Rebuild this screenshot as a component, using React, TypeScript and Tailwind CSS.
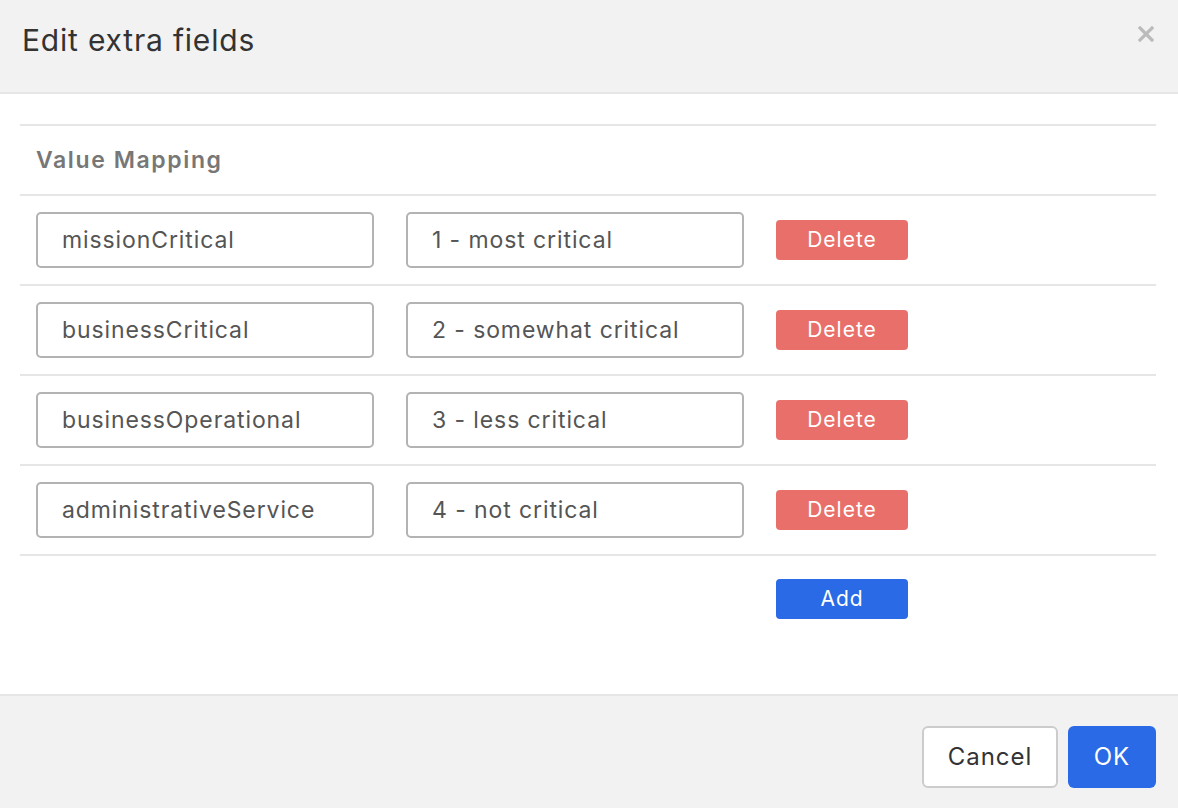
import { useState } from 'react';

type Mapping = { id: number; key: string; label: string };

const initialMappings: Mapping[] = [
  { id: 1, key: 'missionCritical', label: '1 - most critical' },
  { id: 2, key: 'businessCritical', label: '2 - somewhat critical' },
  { id: 3, key: 'businessOperational', label: '3 - less critical' },
  { id: 4, key: 'administrativeService', label: '4 - not critical' },
];

const font = { fontFamily: 'Inter, "Noto Sans", sans-serif' };

export default function App(): JSX.Element {
  const [mappings, setMappings] = useState<Mapping[]>(initialMappings);

  const update = (id: number, field: 'key' | 'label', value: string): void => {
    setMappings((rows) => rows.map((r) => (r.id === id ? { ...r, [field]: value } : r)));
  };

  const remove = (id: number): void => {
    setMappings((rows) => rows.filter((r) => r.id !== id));
  };

  const add = (): void => {
    setMappings((rows) => [...rows, { id: Date.now(), key: '', label: '' }]);
  };

  return (
    <div className="flex h-[808px] w-full flex-col overflow-hidden bg-white" style={font}>
      {/* Header */}
      <div className="flex h-[94px] shrink-0 items-start justify-between border-b-2 border-[#e6e6e6] bg-[#f2f2f2] pl-[22px] pr-[24px]">
        <h1 className="mt-[18px] text-[30px] font-normal tracking-[0.8px] text-[#333]">Edit extra fields</h1>
        <button className="mt-[26px] text-[#bbbbbb]" aria-label="Close">
          <svg width="16" height="16" viewBox="0 0 16 16">
            <path d="M2 2 L14 14 M14 2 L2 14" stroke="currentColor" strokeWidth="3.2" strokeLinecap="square" />
          </svg>
        </button>
      </div>

      {/* Body */}
      <div className="flex-1 pl-[20px] pr-[22px] pt-[30px]">
        <div className="border-t-2 border-[#e6e6e6]">
          <div className="flex h-[70px] items-center border-b-2 border-[#e6e6e6] pl-[16px]">
            <span className="text-[23px] font-semibold tracking-[1.6px] text-[#777]">Value Mapping</span>
          </div>

          {mappings.map((m) => (
            <div key={m.id} className="flex items-center gap-[32px] border-b-2 border-[#e6e6e6] py-[16px] pl-[16px]">
              <input
                value={m.key}
                onChange={(e) => update(m.id, 'key', e.target.value)}
                className="h-[56px] w-[338px] rounded-[5px] border-2 border-[#b3b3b3] bg-white px-[24px] text-[23px] tracking-[0.9px] text-[#555] outline-none"
              />
              <input
                value={m.label}
                onChange={(e) => update(m.id, 'label', e.target.value)}
                className="h-[56px] w-[338px] rounded-[5px] border-2 border-[#b3b3b3] bg-white px-[24px] text-[23px] tracking-[0.9px] text-[#555] outline-none"
              />
              <button
                onClick={() => remove(m.id)}
                className="h-[40px] w-[132px] rounded-[4px] bg-[#e96f6b] text-[21px] tracking-[1px] text-white"
              >
                Delete
              </button>
            </div>
          ))}

          <div className="flex pl-[756px] pt-[23px]">
            <button
              onClick={add}
              className="h-[40px] w-[132px] rounded-[4px] bg-[#2a6ae6] text-[21px] tracking-[1px] text-white"
            >
              Add
            </button>
          </div>
        </div>
      </div>

      {/* Footer */}
      <div className="flex h-[114px] shrink-0 items-start justify-end gap-[10px] border-t-2 border-[#e6e6e6] bg-[#f2f2f2] pr-[22px] pt-[30px]">
        <button className="h-[62px] w-[136px] rounded-[6px] border-2 border-[#cccccc] bg-white text-[24px] tracking-[1px] text-[#333]">
          Cancel
        </button>
        <button className="h-[62px] w-[88px] rounded-[6px] bg-[#2a6ae6] text-[24px] tracking-[1px] text-white">
          OK
        </button>
      </div>
    </div>
  );
}
